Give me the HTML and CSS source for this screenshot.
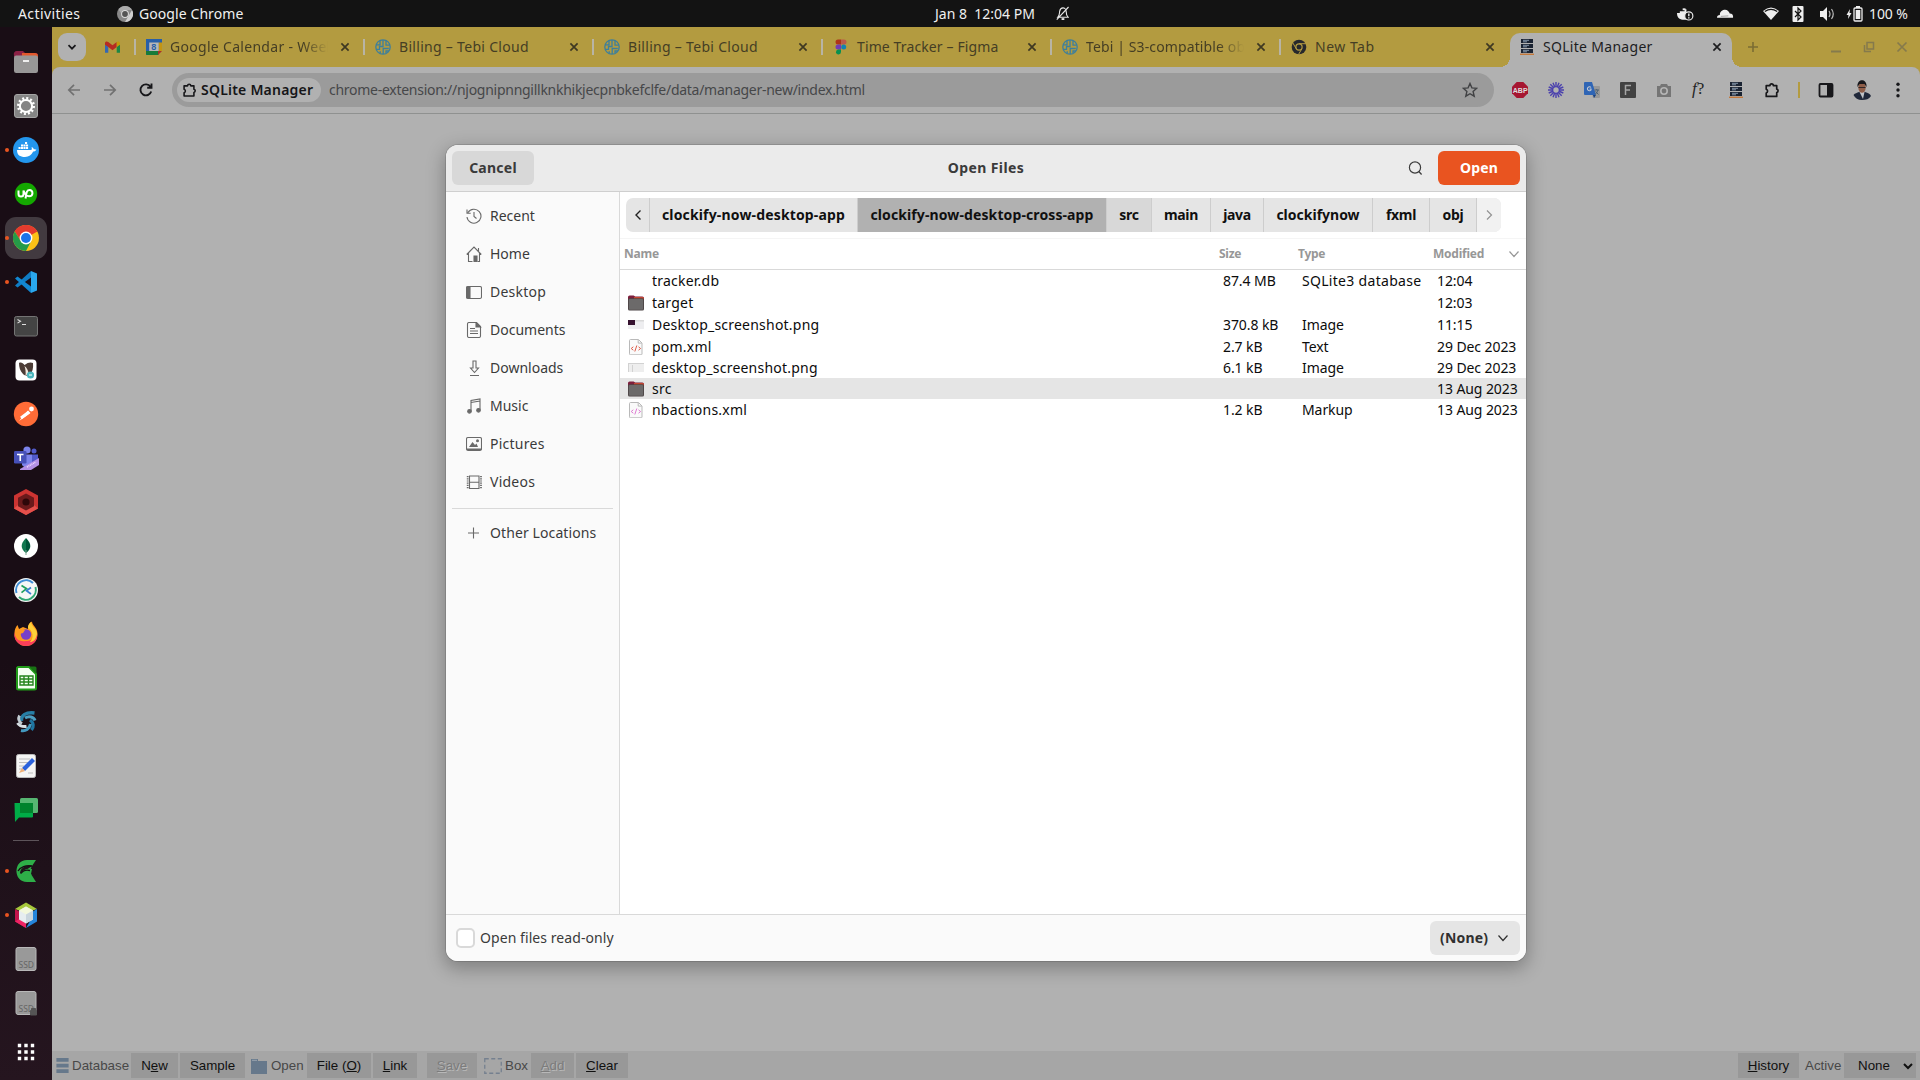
FILE: index.html
```html
<!DOCTYPE html>
<html lang="en">
<head>
<meta charset="utf-8">
<title>SQLite Manager</title>
<link rel="stylesheet" href="styles.css">
</head>
<body>
<svg class="defs" width="0" height="0">
  <symbol id="x" viewBox="0 0 10 10"><path d="M1.4 1.4l7.2 7.2M8.6 1.4L1.4 8.6" fill="none" stroke="currentColor" stroke-width="1.7"/></symbol>
  <symbol id="tebi" viewBox="0 0 16 16"><g fill="none" stroke="#3c7f9d" stroke-width="1.3"><circle cx="8" cy="8" r="7.2"/><path d="M5 1.6v4.2H1.4M8 1v6.5H4.5v2.8H1.2M11 1.8v4.4h3.4M8.2 15V9.5h5.6M5.2 14.4v-2.2M11 14v-2h3"/></g></symbol>
  <symbol id="rack" viewBox="0 0 14 16"><path d="M1 0h12v4H1zM1 5h12v4H1zM1 10h12v4H1z" fill="#1b2433"/><path d="M3 1.3h6M3 6.3h6M3 11.3h6M3 2.8h4M3 7.8h4M3 12.8h4" stroke="#8fa0b5" stroke-width=".9"/><path d="M0 15.3h14" stroke="#c4783a" stroke-width="1.4"/></symbol>
  <symbol id="puzzle" viewBox="0 0 18 18"><path d="M2.500 4h4.200a1.900 1.900 0 0 1 3.800 0h3.800v4a2 2 0 0 1 0 3.900v4.300H2.500v-3.900a2.200 2.200 0 0 0 0-4.200z" fill="none" stroke="#17171a" stroke-width="1.900" stroke-linejoin="round"/></symbol>
  <symbol id="folder" viewBox="0 0 16 16"><path d="M0 2a1.600 1.600 0 0 1 1.600-1.600h4l1.600 1h7.200A1.600 1.600 0 0 1 16 3v4H0z" fill="#7d1f3c"/><path d="M6 2.200h9.600V5H6z" fill="#d8502e"/><rect y="3.300" width="16" height="12.200" rx="1.600" fill="#4d4546"/><rect x=".9" y="4.100" width="14.200" height="10.600" rx="1" fill="#6c6a6a"/></symbol>
  <symbol id="xml" viewBox="0 0 16 16"><path d="M2.500.5h8l3.500 3.500v11a.8.8 0 0 1-.8.8H2.500a1 1 0 0 1-1-1v-13.300a1 1 0 0 1 1-1z" fill="#fafafa" stroke="#b9b9b9"/><path d="M10.200.8v3.300h3.500" fill="none" stroke="#b9b9b9"/><path d="M5.300 7.800L3.200 9.500l2.100 1.700M10.500 7.800l2.100 1.700-2.100 1.700M8.800 6.500l-2 6" fill="none" stroke="currentColor"/></symbol>
  <symbol id="down" viewBox="0 0 12 12"><path d="M1.500 3.500L6 8.500l4.500-5" fill="none" stroke="currentColor" stroke-width="1.200"/></symbol>
</svg>

<header class="topbar">
  <span class="activities">Activities</span>
  <svg class="app-icon" viewBox="0 0 16 16"><circle cx="8" cy="8" r="8" fill="#888"/><path d="M8 0a8 8 0 0 1 7 4H8a4 4 0 0 0-4 3L1.500 3.500A8 8 0 0 1 8 0z" fill="#aaa"/><path d="M15 4a8 8 0 0 1-7 12l3.500-6z" fill="#d0d0d0"/><circle cx="8" cy="8" r="3.900" fill="#ddd"/><circle cx="8" cy="8" r="2.900" fill="#555"/></svg>
  <span class="app-name">Google Chrome</span>
  <span class="clock">Jan 8&nbsp; 12:04 PM</span>
  <svg class="bell" viewBox="0 0 14 16" fill="none" stroke="#e8e8e8" stroke-width="1.200"><path d="M2 12c2-2 1.500-4 2-6.500S6 2 7.500 2 11 3.500 11 6s0 4 2 6zM13.500 1L.8 14.500"/><path d="M6 14h3" stroke-width="2"/></svg>
  <div class="tray">
    <svg class="t-docker" viewBox="0 0 18 16"><path d="M1 7h9V3H8v2H3v2H0c0 4 2 7 6 7h4V7z" fill="#eee"/><path d="M6 2h3v2H6z" fill="#eee"/><circle cx="12.500" cy="10" r="4.300" fill="#131313" stroke="#eee" stroke-width="1.200"/><path d="M12.500 7.500v3m0 1v1.200" stroke="#eee" stroke-width="1.500"/></svg>
    <svg class="t-cloud" viewBox="0 0 18 12"><path d="M0 10c0-2 1-3 3-3 0-4 3-5.500 5.500-5.500S13 3.500 13.500 5.500C16 5.500 17.500 7 17 10z" fill="#eee"/><path d="M4 8.500l8-.5" stroke="#888" stroke-width=".8"/></svg>
    <svg class="t-wifi" viewBox="0 0 16 14"><path d="M0 4Q8-3 16 4L8 13z" fill="#eee"/><path d="M1.800 4.600Q8 .2 14.200 4.600" stroke="#131313" stroke-width="1.200" fill="none"/></svg>
    <svg class="t-bt" viewBox="0 0 12 16"><rect x=".5" width="11" height="16" rx="1" fill="#eee"/><path d="M3 5l6 6-3 3V2l3 3-6 6" fill="none" stroke="#131313" stroke-width="1.200"/></svg>
    <svg class="t-vol" viewBox="0 0 16 16"><path d="M1 5h3l4-4v14l-4-4H1z" fill="#eee"/><path d="M10 5q2 3 0 6M12.500 3q3.500 5 0 10" fill="none" stroke="#bbb" stroke-width="1.200"/></svg>
    <svg class="t-bat" viewBox="0 0 17 16"><path d="M4 3L.5 9h2L2 13l3.500-6h-2z" fill="#eee"/><path d="M10 0h4v2h-4z" fill="#eee"/><rect x="8" y="2" width="8" height="13" rx="1" fill="none" stroke="#eee" stroke-width="1.300"/><path d="M9.700 4h4.600v9H9.700z" fill="#eee"/></svg>
    <span class="percent">100 %</span>
  </div>
</header>

<div class="desktop">
  <nav class="dock">
    <div class="app"><svg viewBox="0 0 26 26"><path d="M1 6a3 3 0 0 1 3-4h6l2 2h10a3 3 0 0 1 3 3v4H1z" fill="#8b2045"/><path d="M9 4h13a3 3 0 0 1 3 3v2H9z" fill="#e2582c"/><rect x="1" y="6.500" width="24" height="17.500" rx="2.200" fill="#989797"/><path d="M10 12h6" stroke="#fff" stroke-width="1.700"/></svg></div>
    <div class="app"><svg viewBox="0 0 26 26"><rect x="1.500" y="1.500" width="23" height="23" rx="2.500" fill="#858585" stroke="#a5a5a5"/><circle cx="13" cy="13" r="7.700" fill="none" stroke="#fff" stroke-width="2.600" stroke-dasharray="2 2.030"/><circle cx="13" cy="13" r="6.100" fill="none" stroke="#fff" stroke-width="2"/></svg></div>
    <div class="app run"><svg viewBox="0 0 26 26"><circle cx="13" cy="13" r="13" fill="#2396ed"/><path d="M4 13h14c1-.3 1-1 .6-3 1.400.6 2 1.500 2.200 2.300 1-.3 2 0 2.600.3-.7 1.600-1.800 2-3.200 2C18.600 18 16 20 12 20c-5 0-8-2-8-7z" fill="#fff"/><path d="M5.500 11h10M8 8.500h7.500M12 6h2.500" stroke="#fff" stroke-width="2.100" stroke-dasharray="2.100 .4"/></svg></div>
    <div class="app"><svg viewBox="0 0 26 26"><circle cx="13" cy="13" r="11.200" fill="#14a800"/><path d="M5.500 9.500v3.500c0 3.400 5 3.400 5 0V9.500c1.500 4 3 5.800 5.500 5.800 4.600 0 4.400-6.300.5-6.300-3 0-3 3-4 8.500" fill="none" stroke="#fff" stroke-width="2"/></svg></div>
    <div class="app run active"><svg viewBox="0 0 26 26"><circle cx="13" cy="13" r="13" fill="#fbc117"/><path d="M13 13L1.740 6.500A13 13 0 0 1 24.260 6.500z" fill="#e33b2e"/><path d="M13 7h11.300a13 13 0 0 0-22.600-.5L7.800 16z" fill="#e33b2e"/><path d="M1.740 6.500A13 13 0 0 0 13 26l5.200-10H7.800z" fill="#259b48"/><circle cx="13" cy="13" r="6.400" fill="#fff"/><circle cx="13" cy="13" r="5" fill="#1b73e8"/></svg></div>
    <div class="app run"><svg viewBox="0 0 26 26"><path d="M18 2l6 2.500v17L18 24z" fill="#2aa7ed"/><path d="M18 2L2 16.500l2.500 2L18 8.500z" fill="#0f7cc4"/><path d="M18 24L2 9.500l2.500-2L18 17.500z" fill="#1287d1"/></svg></div>
    <div class="app"><svg viewBox="0 0 26 26"><rect x="1.500" y="3.500" width="23" height="19.500" rx="2" fill="#444" stroke="#747474"/><path d="M4.500 6.500l3 1.800-3 1.800M9 11.500h4" fill="none" stroke="#ddd" stroke-width="1.100"/></svg></div>
    <div class="app"><svg viewBox="0 0 26 26"><rect x="2.500" y="2.500" width="21" height="21" rx="4" fill="#fff"/><path d="M6 6c2-1 4 0 5.500 2C15 5 18 5 20 6c.500 5-.5 9-3 12-3 1-5 1-7-1-3-3-4-7-4-11z" fill="#4b3b35"/><path d="M11.500 9c1 3 1.500 6 1 10l3-3c-.5-3-1.500-5-4-7z" fill="#f0e7dd"/><circle cx="17.500" cy="18" r="3.600" fill="#4bb6be"/><path d="M16 18h3" stroke="#fff"/></svg></div>
    <div class="app"><svg viewBox="0 0 26 26"><circle cx="13" cy="13" r="12.200" fill="#ff6c37"/><path d="M6 20l9-10.500 2.500 2.500z" fill="#fff"/><circle cx="18.500" cy="8" r="2.400" fill="#fff"/><path d="M8 17l8-6" stroke="#fff" stroke-width="3"/></svg></div>
    <div class="app"><svg viewBox="0 0 26 26"><circle cx="14" cy="5" r="3.600" fill="#7b83eb"/><circle cx="21" cy="6" r="2.500" fill="#5059c9"/><path d="M9 9.500h10V20a6 6 0 0 1-10 0z" fill="#7b83eb"/><path d="M19 9.500h6V18l-6 2z" fill="#5059c9"/><rect x="1" y="6" width="12.500" height="12.500" rx="1.300" fill="#4650b8"/><path d="M4 9.500h6.500M7.250 9.500V16" stroke="#fff" stroke-width="1.600"/><path d="M7 24l19-11v7l-8 5H7z" fill="#b390e5"/><path d="M14 22l9-5" stroke="#e9dcff" stroke-width="1.500" stroke-dasharray="1 .7"/></svg></div>
    <div class="app"><svg viewBox="0 0 26 26"><path d="M13 0l12 6.500v13L13 26 1 19.500v-13z" fill="#cc3432"/><path d="M1 19.500L13 26l12-6.500-4-3.500-8 4.500L5 16z" fill="#e5504b"/><path d="M13 4.500l8 4.200v8.600l-8 4.200-8-4.200V8.700z" fill="#6a1a1b"/><circle cx="13" cy="13" r="3.600" fill="#2d0709"/></svg></div>
    <div class="app"><svg viewBox="0 0 26 26"><circle cx="13" cy="13" r="12" fill="#fff"/><path d="M13 5c6 6 5.500 11 0 15z" fill="#00563a"/><path d="M13 5c-6 6-5.500 11 0 15z" fill="#10774f"/><path d="M13 17v5" stroke="#77a58e"/></svg></div>
    <div class="app"><svg viewBox="0 0 26 26"><circle cx="13" cy="13" r="12" fill="#f5f7f6"/><path d="M3.500 16A10 10 0 0 1 20 6" fill="none" stroke="#3f8ed6" stroke-width="2"/><path d="M22.500 10A10 10 0 0 1 6 20" fill="none" stroke="#31a875" stroke-width="2"/><path d="M8.500 8.500l5 3.200-5 4" fill="none" stroke="#20a05e" stroke-width="1.700"/><path d="M18 10.500l-4.500 3.300 4.500 3.200" fill="none" stroke="#357ed0" stroke-width="1.700"/></svg></div>
    <div class="app"><svg viewBox="0 0 26 26"><path d="M1.500 12c0-3 1-6 3-8l1.500 4 4-2 5 2c0-4 1-6 4-7.500 0 4 5.500 6 5.500 12.500A11.600 11.600 0 0 1 13 25 11.600 11.600 0 0 1 1.500 13z" fill="#ff9a1f"/><path d="M1.500 11C2 18 6 21 13 20c5 0 9-2 11-8 1 8-4 13-11 13A11.600 11.600 0 0 1 1.500 11z" fill="#fb3f5a"/><path d="M18 1c0 4 6 7 6 12-1 6-4 8-7 8 5-5 2-12-2-14 0-3 1-4 3-6z" fill="#ffd139"/><circle cx="13" cy="13.500" r="5.200" fill="#7940c8"/><path d="M4 8l8 1-2 3-4 1z" fill="#ff9a1f"/></svg></div>
    <div class="app"><svg viewBox="0 0 26 26"><path d="M5 2h11l7 7v14a1.500 1.500 0 0 1-1.500 1.500h-16A1.500 1.500 0 0 1 4 23V3z" fill="#f4fff1" stroke="#219b19" stroke-width="2"/><path d="M16 1.500l7.500 7.500V3a1.500 1.500 0 0 0-1.500-1.500z" fill="#197214"/><path d="M7 11h13v9H7zM7 14h13M7 17h13M11 11v9M15.500 11v9" fill="none" stroke="#25851d" stroke-width="1.400"/></svg></div>
    <div class="app"><svg viewBox="0 0 26 26" fill="none"><path d="M8.500 12C8 6 13 3 21.500 4" stroke="#277fa7" stroke-width="3.500"/><path d="M12 9c4-2.500 9-1 10 2.500" stroke="#4d9fc2" stroke-width="3"/><path d="M17 11c4 3 4 7 1.500 10" stroke="#1e75a0" stroke-width="3.200"/><path d="M17.500 15c-1 5-5 7.500-9.500 6.500" stroke="#4399bf" stroke-width="3"/><path d="M13.500 17.500C9 18 6.500 17 4.500 14" stroke="#d7dfe4" stroke-width="3"/><path d="M9 14.500C5.500 12.500 5 9.500 6.500 6.500" stroke="#c2ccd2" stroke-width="2.800"/></svg></div>
    <div class="app"><svg viewBox="0 0 26 26"><rect x="3.500" y="1.500" width="19" height="23" rx="2" fill="#f5f5f4" stroke="#bbb"/><path d="M6 6h11M6 9.500h9M6 13h5M6 16h3M15 20h5" stroke="#bdbdbd" stroke-width="1.200"/><path d="M9 15L19 5l3 3-10 10z" fill="#2b62dc"/><path d="M6 20l3-5 3 3z" fill="#f0b077"/></svg></div>
    <div class="app"><svg viewBox="0 0 26 26"><rect x="7" y="1" width="18" height="15" rx="1.500" fill="#57b672"/><path d="M1.500 6H20v13.500a1 1 0 0 1-1 1H6L2 25z" fill="#00ac47"/><path d="M7 6h13v10H7z" fill="#00832d"/></svg></div>
    <div class="dock-line"></div>
    <div class="app run"><svg viewBox="0 0 26 26"><path d="M23 2H14C0 2 0 24 14 24h9l-5-8 1-5c-6-1-9 1-12 5 0-5 4-9 12-8z" fill="#2eae48"/><path d="M19 8l-2.500 5 2 4-4 0-7-1z" fill="#2eae48"/><path d="M5 13c2-4 8-6 14-5M8 15.500c2-3 5-4 9-3" stroke="#160b13" stroke-width="1.300" fill="none"/></svg></div>
    <div class="app run"><svg viewBox="0 0 26 26"><path d="M13 .5l11 6.500L13 11 2 7z" fill="#a7c83c"/><path d="M2 7l6 3.500v10L13 26 2 19.500z" fill="#c3144b"/><path d="M24 7l-6 3.500v7L13 26l11-6.500z" fill="#2585dc"/><path d="M2 19.500L8 16l5 3v7z" fill="#ee2464"/><path d="M13 4.500l7 4v9l-7 4-7-4v-9z" fill="#e6edf0"/><path d="M13 4.500l7 4-7 4-7-4z" fill="#f3f8dc"/><path d="M13 12.500l7-4v9l-7 4z" fill="#c9d5dd"/></svg></div>
    <div class="app"><svg viewBox="0 0 26 26"><rect x="3" y="1.500" width="20" height="23" rx="2" fill="#999" stroke="#b8b8b8"/><text class="ssd" x="5.500" y="22">SSD</text></svg></div>
    <div class="app"><svg viewBox="0 0 26 26"><rect x="3" y="1.500" width="20" height="23" rx="2" fill="#999" stroke="#b8b8b8"/><text class="ssd" x="5.500" y="22">SSD</text><path d="M17.500 20.500h6v4.500h-6zM18.500 20v-1.500h4V20" fill="#555" stroke="#555"/></svg></div>
    <div class="app grid"><svg viewBox="0 0 26 26" fill="#fff"><path d="M4.800 4.800h3.400v3.400H4.800zM11.300 4.800h3.400v3.400h-3.400zM17.800 4.800h3.400v3.400h-3.400zM4.800 11.300h3.400v3.400H4.800zM11.300 11.300h3.400v3.400h-3.400zM17.800 11.300h3.400v3.400h-3.400zM4.800 17.800h3.400v3.400H4.800zM11.300 17.800h3.400v3.400h-3.400zM17.800 17.800h3.400v3.400h-3.400z"/></svg></div>
  </nav>

  <div class="browser">
    <div class="tabs">
      <div class="tab-search"><svg viewBox="0 0 10 10"><path d="M1.500 3.200L5 6.700l3.500-3.500" fill="none" stroke="#17171a" stroke-width="1.700"/></svg></div>
      <div class="pinned"><svg viewBox="0 0 16 12"><path d="M0 2v10h3.500V6z" fill="#3368b5"/><path d="M16 2v10h-3.500V6z" fill="#1d8744"/><path d="M0 2c0-2 2-2.400 3.500-1.300L8 4.200 12.500.7 12.500 6 8 9.500 3.500 6 0 3.500z" fill="#b72c22"/><path d="M12.500.7C14 -.4 16 0 16 2v1.500L12.500 6z" fill="#c59a0c"/></svg></div>
      <div class="tab"><svg class="fav" viewBox="0 0 16 16"><path d="M0 0h16v11l-5 5H0z" fill="#285fa8"/><path d="M12.500 3.500H16V12h-3.500z" fill="#c49512"/><path d="M0 12h12.500v4H1.500A1.500 1.500 0 0 1 0 14.500z" fill="#177b38"/><path d="M12 12h4l-4 4z" fill="#a7332a"/><path d="M3.200 3.500h9.500V12H3.200z" fill="#b7b7b7"/><text class="cal-num" x="5.300" y="11.200">8</text></svg><span class="title fade">Google Calendar - Week</span><svg class="close"><use href="#x"/></svg></div>
      <div class="tab"><svg class="fav"><use href="#tebi"/></svg><span class="title">Billing – Tebi Cloud</span><svg class="close"><use href="#x"/></svg></div>
      <div class="tab"><svg class="fav"><use href="#tebi"/></svg><span class="title">Billing – Tebi Cloud</span><svg class="close"><use href="#x"/></svg></div>
      <div class="tab"><svg class="fav" viewBox="0 0 16 16"><path d="M8 .5H5a2.500 2.500 0 0 0 0 5h3z" fill="#ae3517"/><path d="M8 .5h3a2.500 2.500 0 0 1 0 5H8z" fill="#bd5a49"/><path d="M8 5.500H5a2.500 2.500 0 0 0 0 5h3z" fill="#733bb2"/><circle cx="10.700" cy="8" r="2.500" fill="#1282b2"/><path d="M8 10.500H5a2.500 2.500 0 1 0 3 2.500z" fill="#08904f"/></svg><span class="title tight">Time Tracker – Figma</span><svg class="close"><use href="#x"/></svg></div>
      <div class="tab"><svg class="fav"><use href="#tebi"/></svg><span class="title fade tight">Tebi | S3-compatible ob</span><svg class="close"><use href="#x"/></svg></div>
      <div class="tab"><svg class="fav" viewBox="0 0 16 16"><circle cx="8" cy="8" r="7.300" fill="#26282c"/><circle cx="8" cy="8" r="3.700" fill="#b39b40"/><circle cx="8" cy="8" r="2.500" fill="#26282c"/><path d="M8 4.700h7M5.200 9.700L1.700 3.700M10.900 9.700L7.500 15.500" stroke="#b39b40"/></svg><span class="title new">New Tab</span><svg class="close"><use href="#x"/></svg></div>
      <div class="tab current"><svg class="fav"><use href="#rack"/></svg><span class="title">SQLite Manager</span><svg class="close"><use href="#x"/></svg></div>
      <svg class="plus" viewBox="0 0 12 12"><path d="M6 1v10M1 6h10" stroke="#7b6d33" stroke-width="1.600"/></svg>
      <div class="win"><svg viewBox="0 0 12 12"><path d="M1 10.500h10" stroke="#857a4c" stroke-width="2"/></svg><svg viewBox="0 0 12 12"><path d="M4 1.500h6.500V8H4zM1.500 4v6.500H8" fill="none" stroke="#857a4c" stroke-width="1.500"/></svg><svg viewBox="0 0 12 12"><path d="M1.500 1.500l9 9M10.500 1.500l-9 9" stroke="#857a4c" stroke-width="1.700"/></svg></div>
    </div>

    <div class="toolbar">
      <svg class="nav-i" viewBox="0 0 16 16"><path d="M14 8H3M8 2.800L2.800 8 8 13.200" fill="none" stroke="#717171" stroke-width="1.700"/></svg>
      <svg class="nav-i" viewBox="0 0 16 16"><path d="M2 8h11M8 2.800L13.200 8 8 13.200" fill="none" stroke="#717171" stroke-width="1.700"/></svg>
      <svg class="nav-i" viewBox="0 0 16 16"><path d="M13.200 9.500A5.500 5.500 0 1 1 12.500 4.800M13.500 1.500v4.300H9.200" fill="none" stroke="#17171a" stroke-width="1.900"/></svg>
      <div class="omnibox">
        <div class="chip"><svg><use href="#puzzle"/></svg><span>SQLite Manager</span></div>
        <span class="url">chrome-extension://njognipnngillknkhikjecpnbkefclfe/data/manager-new/index.html</span>
        <svg class="star" viewBox="0 0 16 16"><path d="M8 1.500l1.900 4.400 4.800.4-3.600 3.200 1.100 4.700L8 11.700l-4.200 2.500 1.100-4.700L1.300 6.300l4.800-.4z" fill="none" stroke="#414244" stroke-width="1.400"/></svg>
      </div>
      <div class="exts">
        <svg viewBox="0 0 16 16"><path d="M4.700 0h6.600L16 4.700v6.600L11.300 16H4.700L0 11.300V4.700z" fill="#a61631"/><text class="abp" x=".8" y="10.600">ABP</text></svg>
        <svg viewBox="0 0 16 16"><path d="M8 0v16M0 8h16M2.300 2.300l11.400 11.400M13.700 2.300L2.300 13.700M5 .7l6 14.600M11 .7L5 15.300M.7 5l14.600 6M15.300 5L.7 11" stroke="#4b41ad" stroke-width="1.400"/><circle cx="8" cy="8" r="2.700" fill="#b1b1b1"/></svg>
        <svg viewBox="0 0 16 16"><path d="M6 4h9a1 1 0 0 1 1 1v10a1 1 0 0 1-1 1H9z" fill="#989898"/><path d="M1 0h7l4 13H1a1 1 0 0 1-1-1V1a1 1 0 0 1 1-1z" fill="#2f65b5"/><path d="M9 13h3l-2 3z" fill="#173f80"/><path d="M7 5.500A2 2 0 1 0 7 8V7H5.500" fill="none" stroke="#c5cad2" stroke-width="1.100"/><path d="M10.500 8H15M12.700 7v1M14 8q-1 3-3 4.500M11.500 9.500l3 3" fill="none" stroke="#4f6374"/></svg>
        <svg viewBox="0 0 16 16"><rect width="16" height="16" rx="1" fill="#424242"/><path d="M5.500 13V3.500H11M5.500 8H10" fill="none" stroke="#a5a5a5" stroke-width="1.500"/></svg>
        <svg viewBox="0 0 16 16"><path d="M1 4h3l1-2h6l1 2h3v11H1z" fill="#757575"/><circle cx="8" cy="9" r="3.200" fill="none" stroke="#b5b5b5" stroke-width="1.600"/></svg>
        <span class="fq"><i>f</i>?</span>
        <svg><use href="#rack"/></svg>
        <svg><use href="#puzzle"/></svg>
        <i class="sep"></i>
        <svg viewBox="0 0 16 16"><rect x="1.500" y="2" width="13" height="12.500" rx="1" fill="none" stroke="#17171a" stroke-width="1.800"/><path d="M9 2h5.500v12.500H9z" fill="#17171a"/></svg>
        <svg class="avatar" viewBox="0 0 20 20"><path d="M1.500 15c1.500-2 3.500-2 5.500-3h6c3 1 5 1.500 6 4-2 3-5 4-9 4s-7-2-8.500-5z" fill="#20283a"/><path d="M7.500 12h5L11 19z" fill="#c0c4c8"/><ellipse cx="10" cy="7.500" rx="3.700" ry="5.200" fill="#8e5d48"/><path d="M5.500 7c-1-9 10-9 9 0l-2-3H7.500z" fill="#17171b"/><path d="M6.500 7.500h7" stroke="#332726"/></svg>
        <svg viewBox="0 0 16 16" fill="#17171a"><circle cx="8" cy="2.300" r="1.700"/><circle cx="8" cy="8" r="1.700"/><circle cx="8" cy="13.700" r="1.700"/></svg>
      </div>
    </div>

    <main class="page"></main>

    <footer class="statusbar">
      <svg class="i-db" viewBox="0 0 13 16"><path d="M0 0h13v4H0zM0 6h13v4H0zM0 12h13v4H0z" fill="#66788b"/></svg><span class="lbl l-db">Database</span>
      <button class="b b-new">N<u>e</u>w</button><button class="b b-sample">Sample</button>
      <svg class="i-open" viewBox="0 0 16 16"><path d="M0 1h7v2h9v13H0z" fill="#66788b"/><path d="M1 2.300h5" stroke="#9aa4af"/></svg><span class="lbl l-open">Open</span>
      <button class="b b-file">File (<u>O</u>)</button><button class="b b-link"><u>L</u>ink</button>
      <button class="b b-save off"><u>S</u>ave</button>
      <svg class="i-box" viewBox="0 0 18 16"><rect x=".75" y=".75" width="16.500" height="14.500" fill="none" stroke="#75808f" stroke-width="1.300" stroke-dasharray="4 2.500"/></svg><span class="lbl l-box">Box</span>
      <button class="b b-add off"><u>A</u>dd</button><button class="b b-clear"><u>C</u>lear</button>
      <button class="b b-history"><u>H</u>istory</button><span class="lbl l-active">Active</span>
      <div class="b b-none"><span>None</span><svg viewBox="0 0 10 10"><path d="M1 3l4 4 4-4" fill="none" stroke="#111" stroke-width="2"/></svg></div>
    </footer>
  </div>
</div>

<section class="dialog">
  <div class="d-head">
    <button class="cancel">Cancel</button>
    <h1>Open Files</h1>
    <div class="d-actions"><svg viewBox="0 0 16 16"><circle cx="8" cy="7.500" r="5.600" fill="none" stroke="#3d3d3d" stroke-width="1.200"/><path d="M11.800 11.500l2.800 3" stroke="#3d3d3d" stroke-width="1.300"/></svg><button class="open">Open</button></div>
  </div>
  <div class="d-body">
    <aside class="places">
      <div class="place"><svg viewBox="0 0 16 16"><path d="M2 4.500A7 7 0 1 1 1 9M1 1.500v3.700h3.700M8 4v4.500l2.500 2"/></svg><span>Recent</span></div>
      <div class="place"><svg viewBox="0 0 16 16"><path d="M.7 8.500L8 1l7.300 7.500M2.500 7v8.500h4M13.500 7v8.500h-2M12.500 2v3"/><path d="M8 10h3v5.500H8z" fill="#696969"/></svg><span>Home</span></div>
      <div class="place"><svg viewBox="0 0 16 16"><rect x=".5" y="2.500" width="15" height="12" rx="1.500"/><path d="M1 3h3v11H1z" fill="#696969"/></svg><span class="loose">Desktop</span></div>
      <div class="place"><svg viewBox="0 0 16 16"><path d="M3 .5h7.500l4 4V14a1.500 1.500 0 0 1-1.500 1.500H3A1.500 1.500 0 0 1 1.500 14V2A1.500 1.500 0 0 1 3 .5zM4 6.500h5M4 9h8M4 11.500h8"/><path d="M10 .5v4.500h4.500z" fill="#696969"/></svg><span>Documents</span></div>
      <div class="place"><svg viewBox="0 0 16 16"><path d="M7 1h3v7h2.500l-4 4.500-4-4.500H7zM4 15.500h9"/></svg><span>Downloads</span></div>
      <div class="place"><svg viewBox="0 0 16 16"><path d="M5 13V2.500l9-1.500v11M5 4.500l9-1.500"/><circle cx="3.500" cy="13.300" r="1.800" fill="#696969"/><circle cx="12.500" cy="12.300" r="1.800" fill="#696969"/></svg><span>Music</span></div>
      <div class="place"><svg viewBox="0 0 16 16"><rect x=".5" y="1.500" width="15" height="13" rx="1.500"/><path d="M1 12.500h14V14H1zM3 11l3.500-5L9 9l1.500-1.500L12 11z" fill="#696969" stroke="none"/><circle cx="11.500" cy="4.800" r="1.500" fill="#696969" stroke="none"/></svg><span class="loose">Pictures</span></div>
      <div class="place"><svg viewBox="0 0 16 16"><path d="M3.500 2h9.500v12.500H3.500zM3.500 8.200h9.500"/><path d="M1.700 2v13M15 2v13" stroke-width="1.800" stroke-dasharray="1.200 1"/></svg><span class="loose">Videos</span></div>
      <hr>
      <div class="place"><svg viewBox="0 0 16 16"><path d="M7.500 2.500v11M2 8h11"/></svg><span class="other">Other Locations</span></div>
    </aside>
    <div class="files">
      <div class="path">
        <span class="p0"><svg viewBox="0 0 10 12"><path d="M7.500 1.500L3 6l4.500 4.500" fill="none" stroke="#222" stroke-width="1.400"/></svg></span><span class="p1">clockify-now-desktop-app</span><span class="p2">clockify-now-desktop-cross-app</span><span class="p3">src</span><span class="p4">main</span><span class="p5">java</span><span class="p6">clockifynow</span><span class="p7">fxml</span><span class="p8">obj</span><span class="p9"><svg viewBox="0 0 10 12"><path d="M3 1.500L7.500 6 3 10.500" fill="none" stroke="#929292" stroke-width="1.200"/></svg></span>
      </div>
      <div class="cols"><span>Name</span><span>Size</span><span>Type</span><span class="mod">Modified<svg><use href="#down"/></svg></span></div>
      <div class="row"><i></i><span class="name">tracker.db</span><span>87.4 MB</span><span class="db">SQLite3 database</span><span>12:04</span></div>
      <div class="row"><svg><use href="#folder"/></svg><span class="name">target</span><span></span><span></span><span>12:03</span></div>
      <div class="row"><svg viewBox="0 0 16 16"><path d="M0 3h16v9H0z" fill="#eeeef0"/><path d="M0 3h7v5H0z" fill="#36122f"/><path d="M7 3h9v1.500H7z" fill="#d9d9d9"/></svg><span class="name">Desktop_screenshot.png</span><span>370.8 kB</span><span>Image</span><span>11:15</span></div>
      <div class="row s"><svg class="orange"><use href="#xml"/></svg><span class="name">pom.xml</span><span>2.7 kB</span><span>Text</span><span>29 Dec 2023</span></div>
      <div class="row s"><svg viewBox="0 0 16 16"><path d="M0 3h16v9H0z" fill="#eee"/><path d="M0 3h16v1H0zM0 4h1v8H0zM4 5h1v7H4z" fill="#d2d2d2"/></svg><span class="name">desktop_screenshot.png</span><span>6.1 kB</span><span>Image</span><span>29 Dec 2023</span></div>
      <div class="row s sel"><svg><use href="#folder"/></svg><span class="name">src</span><span></span><span></span><span>13 Aug 2023</span></div>
      <div class="row s"><svg class="pink"><use href="#xml"/></svg><span class="name">nbactions.xml</span><span>1.2 kB</span><span>Markup</span><span>13 Aug 2023</span></div>
    </div>
  </div>
  <div class="d-foot">
    <label><i class="check"></i><span>Open files read-only</span></label>
    <button class="filter">(None)<svg><use href="#down"/></svg></button>
  </div>
</section>
</body>
</html>
```
FILE: styles.css
```css
* { box-sizing: border-box; }
body { margin: 0; width: 1920px; height: 1080px; overflow: hidden; position: relative; font: 14px/20px "Noto Sans", "Open Sans", sans-serif; background: #b1b1b1; }
svg { display: block; flex: none; }
.defs { position: absolute; }
button { border: 0; padding: 0; margin: 0; font: inherit; color: inherit; letter-spacing: inherit; }
span { white-space: nowrap; }

/* system bar */
.topbar { height: 27px; background: #131313; color: #f0f0f0; display: flex; align-items: center; padding-left: 18px; }
.activities { width: 99px; letter-spacing: .4px; }
.app-icon { width: 16px; height: 16px; margin-right: 6px; }
.app-name { width: 796px; letter-spacing: .08px; }
.clock { width: 121px; }
.bell { width: 13px; height: 15px; }
.tray { display: flex; align-items: center; margin-left: auto; padding-right: 13px; }
.t-docker { width: 17px; height: 16px; margin-right: 23px; }
.t-cloud { width: 17px; height: 12px; margin-right: 29px; }
.t-wifi { width: 16px; height: 14px; margin-right: 13px; }
.t-bt { width: 12px; height: 16px; margin-right: 15px; }
.t-vol { width: 16px; height: 16px; margin-right: 11px; }
.t-bat { width: 17px; height: 16px; margin-right: 6px; }
.percent { width: 38px; letter-spacing: -.1px; }

.desktop { display: flex; height: 1053px; }

/* launcher */
.dock { width: 52px; flex: none; padding-top: 13px; background: linear-gradient(#190d15 60%, #25151f); display: flex; flex-direction: column; align-items: center; }
.app { width: 42px; height: 42px; margin: 1px 0; border-radius: 11px; display: grid; place-items: center; position: relative; flex: none; }
.app svg { width: 26px; height: 26px; }
.app.active { background: #423a40; }
.app.run::before { content: ""; position: absolute; left: 0; top: 19px; width: 4px; height: 4px; border-radius: 50%; background: #e95420; }
.dock-line { width: 26px; height: 1px; background: #5d545a; margin: 8px 0; flex: none; }
.app.grid { margin-top: 6px; }
.ssd { font: 8.500px "Noto Sans", sans-serif; fill: #666; }

/* browser window */
.browser { flex: 1; display: flex; flex-direction: column; background: #b39b40; min-width: 0; }
.tabs { height: 40px; display: flex; align-items: center; padding-left: 6px; flex: none; }
.tab-search { width: 28px; height: 28px; border-radius: 9px; background: #b1b1b1; display: grid; place-items: center; }
.tab-search svg { width: 10px; height: 10px; }
.pinned { width: 48px; padding-left: 19px; }
.pinned svg { width: 15px; height: 12px; }
.tab { width: 229px; height: 16px; border-left: 2px solid #b8b4a5; padding-left: 10px; display: flex; align-items: center; flex: none; color: #453e24; }
.tab .fav { width: 16px; height: 16px; margin-right: 8px; }
.title { width: 158px; letter-spacing: .3px; }
.tight { letter-spacing: .12px; }
.new { letter-spacing: .5px; }
.fade { -webkit-mask-image: linear-gradient(90deg, #000 84%, transparent); mask-image: linear-gradient(90deg, #000 84%, transparent); }
.close { width: 10px; height: 10px; margin-left: 12px; color: #3e3822; }
.tab.current { position: relative; width: 222px; height: 34px; margin: 6px 0 0 2px; border: 0; border-radius: 10px 10px 0 0; background: #b1b1b1; color: #1d1d1f; padding: 0 0 6px 9px; }
.tab.current::before, .tab.current::after { content: ""; position: absolute; bottom: 0; width: 10px; height: 10px; }
.tab.current::before { left: -10px; background: radial-gradient(circle at 0 0, transparent 10px, #b1b1b1 10px); }
.tab.current::after { right: -10px; background: radial-gradient(circle at 100% 0, transparent 10px, #b1b1b1 10px); }
.tab.current .title { width: 166px; }
.tab.current .close { color: #1d1d1f; margin-left: 3px; }
.plus { width: 12px; height: 12px; margin-left: 15px; }
.win { display: flex; gap: 21px; margin-left: auto; padding-right: 12px; }
.win svg { width: 12px; height: 12px; }

.toolbar { height: 47px; border-bottom: 1px solid #8f9190; background: #b1b1b1; display: flex; align-items: center; padding-left: 14px; flex: none; border-radius: 8px 8px 0 0; }
.nav-i { width: 16px; height: 16px; margin-right: 20px; }
.omnibox { width: 1322px; height: 34px; margin-left: -2px; border-radius: 17px; background: #9b9b9b; display: flex; align-items: center; padding: 0 16px 0 5px; color: #464749; }
.chip { width: 144px; height: 24px; border-radius: 12px; background: #b1b1b1; color: #161618; display: flex; align-items: center; padding-left: 5px; gap: 4px; font-weight: 600; }
.chip svg { width: 15px; height: 16px; }
.chip span { letter-spacing: .22px; }
.url { margin-left: 8px; letter-spacing: -.27px; }
.star { width: 16px; height: 16px; margin-left: auto; }
.exts { display: flex; align-items: center; padding-left: 18px; }
.exts svg, .fq { width: 16px; height: 16px; margin-right: 20px; }
.fq { font: 17px/14px "Liberation Serif", serif; color: #242424; }
.exts .sep { width: 2px; height: 16px; background: #b39b40; margin: 0 18px 0 -2px; }
.exts .avatar { width: 20px; height: 20px; margin: 0 18px 0 -2px; }
.exts svg:last-child { margin-right: 0; }
.abp { font: bold 7px "Liberation Sans", sans-serif; fill: #ddd; }
.cal-num { font: bold 9px "Liberation Sans", sans-serif; fill: #285fa8; }

.page { flex: 1; background: #b1b1b1; }
.statusbar { height: 29px; background: #a6a6a6; display: flex; align-items: center; padding: 0 4px; font: 13.330px/15px "Liberation Sans", Arial, sans-serif; color: #484848; flex: none; }
.b { height: 25px; background: #989898; color: #101010; text-align: center; margin-right: 2px; white-space: nowrap; }
.b.off { color: #7c7c7c; text-shadow: 1px 1px 0 #b8b8b8; }
.i-db { width: 13px; height: 15px; margin-right: 3px; }
.l-db { width: 59px; }
.b-new { width: 47px; }
.b-sample { width: 65px; margin-right: 6px; }
.i-open { width: 16px; height: 16px; margin-right: 4px; }
.l-open { width: 36px; }
.b-file { width: 64px; }
.b-link { width: 44px; margin-right: 10px; }
.b-save { width: 50px; margin-right: 7px; }
.i-box { width: 18px; height: 16px; margin-right: 3px; }
.l-box { width: 26px; }
.b-add { width: 43px; }
.b-clear { width: 52px; }
.b-history { width: 61px; margin: 0 6px 0 auto; }
.l-active { width: 39px; }
.b-none { width: 72px; margin: 0; display: flex; align-items: center; justify-content: space-between; padding: 0 3px 0 14px; }
.b-none svg { width: 10px; height: 10px; }

/* file chooser, floating over the window */
.dialog { position: absolute; left: 446px; top: 145px; width: 1080px; height: 816px; border-radius: 12px; overflow: hidden; background: #fff; box-shadow: 0 0 0 1px rgba(0,0,0,.12), 0 6px 18px 2px rgba(0,0,0,.27); display: flex; flex-direction: column; color: #3a3a3a; }
.d-head { height: 47px; flex: none; background: #ebebeb; border-bottom: 1px solid #cfcfcf; display: grid; grid-template-columns: 1fr auto 1fr; align-items: center; padding: 0 6px; font-weight: 700; }
.cancel { width: 82px; height: 34px; border-radius: 6px; background: #d8d8d8; letter-spacing: .25px; }
h1 { font: inherit; margin: 0; letter-spacing: .4px; }
.d-actions { display: flex; align-items: center; justify-content: flex-end; gap: 15px; }
.d-actions svg { width: 16px; height: 16px; }
.open { width: 82px; height: 34px; border-radius: 6px; background: #e95420; color: #fff; letter-spacing: .2px; }
.d-body { flex: 1; display: flex; min-height: 0; }
.places { width: 174px; flex: none; background: #fafafa; border-right: 1px solid #d9d9d9; padding: 5px 6px; }
.place { height: 38px; display: flex; align-items: center; gap: 8px; padding-left: 14px; }
.place svg { width: 16px; height: 16px; fill: none; stroke: #696969; stroke-width: 1.100; }
.place .loose { letter-spacing: .25px; }
.place .other { letter-spacing: .1px; }
.places hr { border: 0; height: 1px; background: #d9d9d9; margin: 7px 0 5px; }
.files { flex: 1; min-width: 0; }
.path { height: 34px; width: 875px; margin: 6px 0 6px 6px; display: flex; border-radius: 7px; overflow: hidden; background: #e5e5e5; color: #101010; font-weight: 700; letter-spacing: -.3px; }
.path span { border-right: 1px solid #cdcdcd; display: grid; place-items: center; flex: none; }
.path svg { width: 10px; height: 12px; }
.p0 { width: 24px; }
.p1 { width: 208px; letter-spacing: .16px; }
.p2 { width: 249px; background: #b1b1b1; letter-spacing: .11px; }
.p3 { width: 45px; background: #d8d8d8; }
.p4 { width: 59px; }
.p5 { width: 53px; }
.p6 { width: 109px; letter-spacing: 0; }
.p7 { width: 57px; }
.p8 { width: 47px; }
.path .p9 { width: 24px; border: 0; background: #f1f1f1; }
.cols { height: 32px; border-top: 1px solid #f5f5f5; border-bottom: 1px solid #d9d9d9; display: grid; grid-template-columns: 595px 79px 135px 1fr; align-items: center; padding-left: 4px; font-size: 12px; font-weight: 700; letter-spacing: -.25px; color: #979797; }
.mod { display: flex; align-items: center; justify-content: space-between; padding-right: 6px; }
.mod svg { width: 12px; height: 12px; }
.row { height: 22px; display: grid; grid-template-columns: 24px 571px 79px 135px 1fr; align-items: center; padding-left: 8px; color: #0c0c0c; letter-spacing: -.08px; }
.row.s { height: 21px; }
.row svg { width: 16px; height: 16px; }
.row .name { letter-spacing: .22px; }
.row .db { letter-spacing: .3px; }
.sel { background: #e5e5e5; }
.orange { color: #df5c49; }
.pink { color: #df7bd3; }
.d-foot { height: 47px; flex: none; border-top: 1px solid #d9d9d9; background: #fafafa; display: flex; align-items: center; justify-content: space-between; padding: 0 6px 0 10px; }
.d-foot label { display: flex; align-items: center; gap: 5px; letter-spacing: .07px; }
.check { width: 19px; height: 20px; border: 2px solid #d9d9d9; border-radius: 5px; background: #fff; }
.filter { width: 90px; height: 34px; border-radius: 6px; background: #e5e5e5; font-weight: 700; display: flex; align-items: center; justify-content: space-between; padding: 0 11px 0 10px; color: #303030; letter-spacing: .2px; }
.filter svg { width: 12px; height: 12px; }
```
